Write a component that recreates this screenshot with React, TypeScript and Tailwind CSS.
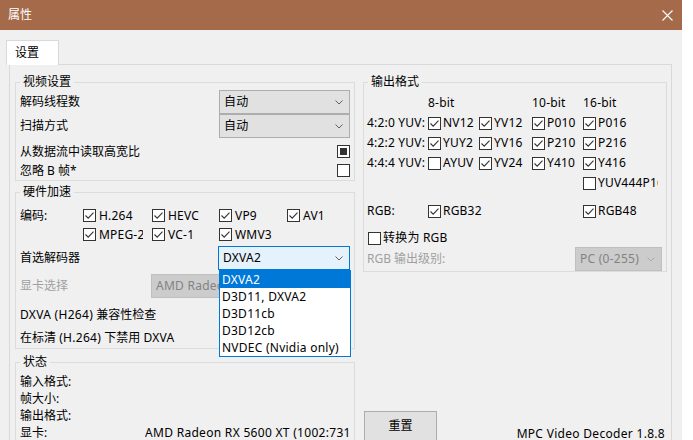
import React from "react";

type CbState = "on" | "off" | "mixed";

function Box({ state }: { state: CbState }) {
  return (
    <span className="relative inline-flex h-[13px] w-[13px] shrink-0 items-center justify-center border border-[#333333] bg-white">
      {state === "on" && (
        <svg width="11" height="11" viewBox="0 0 11 11" className="block">
          <path d="M1.5 5.5 L4.2 8.2 L9.5 2.6" stroke="#333333" strokeWidth="1.1" fill="none" />
        </svg>
      )}
      {state === "mixed" && <span className="block h-[7px] w-[7px] bg-[#333333]" />}
    </span>
  );
}

function Check({ label, state = "on", w, gap = "gap-[3px]" }: { label: string; state?: CbState; w?: string; gap?: string }) {
  return (
    <span className={`flex items-center overflow-hidden whitespace-nowrap ${gap} ${w ?? ""}`}>
      <Box state={state} />
      <span className="tracking-[0.2px]">{label}</span>
    </span>
  );
}

function Chevron({ color = "#606060" }: { color?: string }) {
  return (
    <svg width="8" height="5" viewBox="0 0 8 5" className="block shrink-0">
      <path d="M0.5 0.5 L4 4 L7.5 0.5" stroke={color} strokeWidth="1" fill="none" />
    </svg>
  );
}

function Combo({ text, kind = "normal", w }: { text: string; kind?: "normal" | "focus" | "disabled"; w: string }) {
  const cls =
    kind === "focus"
      ? "bg-[#e5f1fb] border-[#0078d7] text-black"
      : kind === "disabled"
      ? "bg-[#cccccc] border-[#bfbfbf] text-[#838383]"
      : "bg-[#e1e1e1] border-[#adadad] text-black";
  return (
    <div className={`flex h-[24px] items-center justify-between border pl-[4px] pr-[6px] ${cls} ${w}`}>
      <span className="overflow-hidden whitespace-nowrap tracking-[0.25px]">{text}</span>
      <Chevron color={kind === "disabled" ? "#a8a8a8" : "#606060"} />
    </div>
  );
}

function Group({ title, children, className = "" }: { title: string; children: React.ReactNode; className?: string }) {
  return (
    <fieldset className={`min-w-0 border border-[#dcdcdc] px-[4px] ${className}`}>
      <legend className="px-[3px] leading-[16px]">{title}</legend>
      {children}
    </fieldset>
  );
}

export default function App() {
  return (
    <div className="h-[440px] w-[693px] overflow-hidden bg-white font-['Noto_Sans','Noto_Sans_CJK_SC',sans-serif] text-[12px] leading-[16px] text-black">
      <div className="flex h-[440px] w-[682px] flex-col bg-[#f0f0f0]">
        {/* title bar */}
        <div className="flex h-[30px] shrink-0 items-center justify-between bg-[#a46a4a] pl-[8px] pr-[9px] text-white">
          <span>属性</span>
          <svg width="11" height="11" viewBox="0 0 11 11" className="block">
            <path d="M0.5 0.5 L10.5 10.5 M10.5 0.5 L0.5 10.5" stroke="white" strokeWidth="1.1" fill="none" />
          </svg>
        </div>

        <div className="flex flex-1 flex-col pl-[6px] pt-[10px]">
          {/* tab */}
          <div className="relative z-10 flex h-[25px] w-[53px] items-center border border-b-0 border-[#d9d9d9] bg-white pl-[8px]">
            设置
          </div>
          {/* panel */}
          <div className="-mt-px ml-[3px] flex w-[663px] flex-1 gap-[8px] border border-[#d9d9d9] bg-[#f0f0f0] pl-[5px] pt-[9px]">
            {/* left column */}
            <div className="flex w-[340px] flex-col">
              <Group title="视频设置">
                <div className="flex h-[24px] items-center justify-between">
                  <span>解码线程数</span>
                  <Combo text="自动" w="w-[131px]" />
                </div>
                <div className="flex h-[24px] items-center justify-between">
                  <span>扫描方式</span>
                  <Combo text="自动" w="w-[131px]" />
                </div>
                <div className="mt-[4px] flex h-[19px] items-center justify-between">
                  <span>从数据流中读取高宽比</span>
                  <Box state="mixed" />
                </div>
                <div className="flex h-[19px] items-center justify-between">
                  <span>忽略 B 帧*</span>
                  <Box state="off" />
                </div>
              </Group>

              <Group title="硬件加速" className="mt-[3px]">
                <div className="mt-[6px] grid grid-cols-[63px_69px_67px_68px_auto]">
                  <span className="flex h-[19px] items-center">编码:</span>
                  <span className="flex h-[19px] items-center"><Check label="H.264" w="w-[60px]" /></span>
                  <span className="flex h-[19px] items-center"><Check label="HEVC" w="w-[60px]" /></span>
                  <span className="flex h-[19px] items-center"><Check label="VP9" w="w-[60px]" /></span>
                  <span className="flex h-[19px] items-center"><Check label="AV1" w="w-[50px]" /></span>
                  <span className="h-[19px]" />
                  <span className="flex h-[19px] items-center"><Check label="MPEG-2" w="w-[60px]" /></span>
                  <span className="flex h-[19px] items-center"><Check label="VC-1" w="w-[60px]" /></span>
                  <span className="flex h-[19px] items-center"><Check label="WMV3" w="w-[60px]" /></span>
                  <span className="h-[19px]" />
                </div>
                <div className="relative mt-[2px] flex h-[24px] items-center justify-between">
                  <span>首选解码器</span>
                  <Combo text="DXVA2" kind="focus" w="w-[132px]" />
                  {/* open dropdown list */}
                  <div className="absolute left-[199px] top-[24px] z-20 w-[132px] border border-[#0078d7] bg-white tracking-[0.25px]">
                    <div className="flex h-[17px] items-center bg-[#0078d7] pl-[2px] text-white">DXVA2</div>
                    <div className="flex h-[17px] items-center pl-[2px]">D3D11, DXVA2</div>
                    <div className="flex h-[17px] items-center pl-[2px]">D3D11cb</div>
                    <div className="flex h-[17px] items-center pl-[2px]">D3D12cb</div>
                    <div className="flex h-[17px] items-center pl-[2px]">NVDEC (Nvidia only)</div>
                  </div>
                </div>
                <div className="mt-[4px] flex h-[24px] items-center justify-between">
                  <span className="text-[#a0a0a0]">显卡选择</span>
                  <Combo text="AMD Radeon RX 5600 XT" kind="disabled" w="w-[199px]" />
                </div>
                <div className="mt-[6px] flex h-[22px] items-center">
                  <span><span className="tracking-[0.3px]">DXVA (H264)</span> 兼容性检查</span>
                </div>
                <div className="mt-[2px] flex h-[20px] items-center">
                  <span>在标清 <span className="tracking-[0.3px]">(H.264)</span> 下禁用 <span className="tracking-[0.3px]">DXVA</span></span>
                </div>
              </Group>

              <Group title="状态" className="mt-[5px] pb-[20px]">
                <div className="mt-[3px] grid grid-cols-[125px_1fr]">
                  <span className="flex h-[17px] items-center">输入格式:</span>
                  <span className="h-[17px]" />
                  <span className="flex h-[17px] items-center">帧大小:</span>
                  <span className="h-[17px]" />
                  <span className="flex h-[17px] items-center">输出格式:</span>
                  <span className="h-[17px]" />
                  <span className="flex h-[17px] items-center">显卡:</span>
                  <span className="flex h-[17px] items-center overflow-hidden whitespace-nowrap tracking-[0.3px]">AMD Radeon RX 5600 XT (1002:731F)</span>
                </div>
              </Group>
            </div>

            {/* right column */}
            <div className="flex w-[304px] flex-col">
              <Group title="输出格式">
                <div className="mt-[3px] grid grid-cols-[60px_51px_53px_51px_1fr] tracking-[0.2px] [&>*]:flex [&>*]:h-[20px] [&>*]:items-center">
                  <span />
                  <span>8-bit</span>
                  <span />
                  <span>10-bit</span>
                  <span>16-bit</span>

                  <span className="-ml-px">4:2:0 YUV:</span>
                  <span><Check label="NV12" gap="gap-[2px]" /></span>
                  <span><Check label="YV12" gap="gap-[2px]" /></span>
                  <span><Check label="P010" gap="gap-[2px]" /></span>
                  <span><Check label="P016" gap="gap-[2px]" /></span>

                  <span className="-ml-px">4:2:2 YUV:</span>
                  <span><Check label="YUY2" gap="gap-[2px]" /></span>
                  <span><Check label="YV16" gap="gap-[2px]" /></span>
                  <span><Check label="P210" gap="gap-[2px]" /></span>
                  <span><Check label="P216" gap="gap-[2px]" /></span>

                  <span className="-ml-px">4:4:4 YUV:</span>
                  <span><Check label="AYUV" state="off" gap="gap-[2px]" /></span>
                  <span><Check label="YV24" gap="gap-[2px]" /></span>
                  <span><Check label="Y410" gap="gap-[2px]" /></span>
                  <span><Check label="Y416" gap="gap-[2px]" /></span>

                  <span />
                  <span />
                  <span />
                  <span />
                  <span><Check label="YUV444P16" state="off" gap="gap-[2px]" w="w-[75px]" /></span>
                </div>
                <div className="mt-[8px] grid h-[20px] grid-cols-[60px_155px_1fr] items-center">
                  <span className="-ml-px tracking-[0.2px]">RGB:</span>
                  <span><Check label="RGB32" gap="gap-[2px]" /></span>
                  <span><Check label="RGB48" gap="gap-[2px]" /></span>
                </div>
                <div className="mt-[8px] flex h-[18px] items-center">
                  <Check label="转换为 RGB" gap="gap-[2px]" state="off" />
                </div>
                <div className="flex h-[24px] items-center justify-between">
                  <span className="-ml-px text-[#a0a0a0]">RGB 输出级别:</span>
                  <Combo text="PC (0-255)" kind="disabled" w="w-[87px]" />
                </div>
              </Group>
              <div className="mt-[139px] flex items-start">
                <div className="ml-px flex h-[30px] w-[73px] items-center justify-center border border-[#adadad] bg-[#e1e1e1]">
                  重置
                </div>
                <span className="ml-auto mr-[2px] mt-[15px] tracking-[0.3px]">MPC Video Decoder 1.8.8</span>
              </div>
            </div>
          </div>
        </div>
      </div>
    </div>
  );
}
